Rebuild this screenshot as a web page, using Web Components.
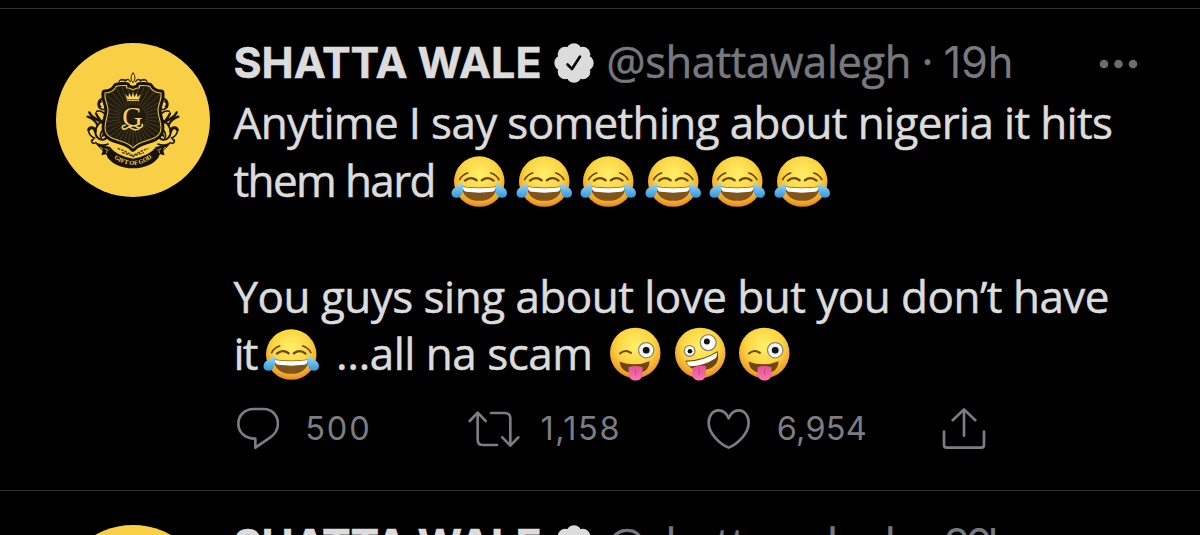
<!DOCTYPE html>
<html lang="en">
<head>
<meta charset="utf-8">
<title>Timeline</title>
<style>
  body {
    margin: 0;
    height: 535px;
    overflow: hidden;
    background: #000;
    color: #dcdcdc;
    font-family: "Open Sans", "Noto Sans", sans-serif;
  }
</style>
</head>
<body>
<tweet-timeline>
  <tweet-card name="SHATTA WALE" handle="@shattawalegh" time="19h" replies="500" retweets="1,158" likes="6,954">
    <tweet-line><fit-text width="879.5">Anytime I say something about nigeria it hits</fit-text></tweet-line>
    <tweet-line><fit-text width="203">them hard</fit-text><emoji-face kind="joy" style="margin-left: 10.5px"></emoji-face><emoji-face kind="joy"></emoji-face><emoji-face kind="joy"></emoji-face><emoji-face kind="joy"></emoji-face><emoji-face kind="joy"></emoji-face><emoji-face kind="joy"></emoji-face></tweet-line>
    <tweet-line></tweet-line>
    <tweet-line><fit-text width="876">You guys sing about love but you don’t have</fit-text></tweet-line>
    <tweet-line><fit-text width="25">it</fit-text><emoji-face kind="joy"></emoji-face><fit-text width="257" style="margin-left: 13px">…all na scam</fit-text><emoji-face kind="wink" style="margin-left: 10px"></emoji-face><emoji-face kind="zany"></emoji-face><emoji-face kind="wink"></emoji-face></tweet-line>
  </tweet-card>
  <tweet-card name="SHATTA WALE" handle="@shattawalegh" time="20h"></tweet-card>
</tweet-timeline>

<script>
// spreads a run of text over a given advance width
class FitText extends HTMLElement {
  constructor() {
    super();
    this.attachShadow({ mode: 'open' });
    this.shadowRoot.innerHTML = `
      <style>
        :host { display: inline-block; white-space: nowrap; flex: none; }
      </style>
      <span><slot></slot></span>
    `;
  }

  connectedCallback() {
    const width = Number(this.getAttribute('width'));
    const count = this.textContent.length;
    const span = this.shadowRoot.querySelector('span');
    const natural = span.getBoundingClientRect().width;
    this.style.width = width + 'px';
    if (count > 1) {
      this.style.letterSpacing = (width - natural) / (count - 1) + 'px';
    }
  }
}

class TweetLine extends HTMLElement {
  constructor() {
    super();
    this.attachShadow({ mode: 'open' });
    this.shadowRoot.innerHTML = `
      <style>
        :host {
          display: flex;
          height: 57.8px;
          line-height: 57.8px;
          font-size: 44px;
          -webkit-text-stroke: .5px currentColor;
        }
      </style>
      <slot></slot>
    `;
  }
}

const FACE = `
  <defs>
    <radialGradient id="skin" cx=".5" cy=".36" r=".66">
      <stop offset="0" stop-color="#fff06a"/>
      <stop offset=".55" stop-color="#fbd542"/>
      <stop offset=".85" stop-color="#f0a52c"/>
      <stop offset="1" stop-color="#d97f1b"/>
    </radialGradient>
    <linearGradient id="tear" x1="0" y1="0" x2="0" y2="1">
      <stop offset="0" stop-color="#9edcf6"/>
      <stop offset="1" stop-color="#3196dc"/>
    </linearGradient>
    <linearGradient id="tongue" x1="0" y1="0" x2="0" y2="1">
      <stop offset="0" stop-color="#e35391"/>
      <stop offset="1" stop-color="#f977b3"/>
    </linearGradient>
  </defs>
  <circle r="76" fill="url(#skin)"/>`;

const FACES = {
  joy: `
    <g fill="none" stroke="#6b430f" stroke-linecap="round">
      <path stroke-width="5" d="M-59 -6Q-51 -21 -35 -26M59 -6Q51 -21 35 -26"/>
      <path stroke-width="7" d="M-43 -3Q-26 -17 -8 -4M43 -3Q26 -17 8 -4"/>
    </g>
    <path fill="#80551b" d="M-53 14Q0 22 53 14Q48 58 0 58Q-48 58 -53 14Z"/>
    <path fill="#fff" d="M-50 16Q0 24 50 16Q48 30 38 31Q0 36 -38 31Q-48 30 -50 16Z"/>
    <path fill="url(#tear)" d="M-50 2C-46 24 -50 49 -68 49C-84 49 -88 34 -78 22C-70 15 -57 11 -50 2Z"/>
    <path fill="url(#tear)" d="M50 2C46 24 50 49 68 49C84 49 88 34 78 22C70 15 57 11 50 2Z"/>`,
  wink: `
    <path fill="none" stroke="#704512" stroke-width="6" stroke-linecap="round" d="M-46 2Q-30 -12 -13 0"/>
    <circle cx="33" cy="-8" r="23" fill="#fff" stroke="#8d8568" stroke-width="4"/>
    <circle cx="33" cy="-8" r="15" fill="#e9ecec"/>
    <circle cx="33" cy="-8" r="10" fill="#111"/>
    <path fill="#704512" d="M-47 27Q0 43 43 25Q42 60 0 62Q-44 60 -47 27Z"/>
    <path fill="url(#tongue)" d="M-20 43Q0 36 22 43V64Q20 83 1 83Q-18 83 -20 64Z"/>
    <path stroke="#d0437f" stroke-width="3" d="M1 50V67"/>`,
  zany: `
    <circle cx="24" cy="-31" r="24" fill="#fff" stroke="#8d8568" stroke-width="4"/>
    <circle cx="20" cy="-34" r="9" fill="#111"/>
    <circle cx="-32" cy="-6" r="16" fill="#fff" stroke="#8d8568" stroke-width="4"/>
    <circle cx="-31" cy="-5" r="7" fill="#111"/>
    <path fill="#704512" d="M-45 24Q10 22 52 -6Q62 38 20 50Q-30 62 -45 24Z"/>
    <path fill="#fff" d="M-41 27Q10 25 50 -1Q52 10 46 16Q10 40 -32 40Q-39 36 -41 27Z"/>
    <path fill="url(#tongue)" d="M-24 46Q-4 34 17 40V64Q15 83 -3 83Q-22 83 -24 64Z"/>
    <path stroke="#d0437f" stroke-width="3" d="M-3 48V66"/>`
};

class EmojiFace extends HTMLElement {
  constructor() {
    super();
    this.attachShadow({ mode: 'open' });
  }

  connectedCallback() {
    const kind = this.getAttribute('kind');
    const top = kind === 'joy' ? -89 : -84;
    this.shadowRoot.innerHTML = `
      <style>
        :host { display: block; flex: none; width: 64.5px; height: 57.8px; }
        svg { display: block; width: 100%; height: 100%; }
      </style>
      <svg viewBox="-97 ${top} 194 174">${FACE}${FACES[kind]}</svg>
    `;
  }
}

class CrestAvatar extends HTMLElement {
  constructor() {
    super();
    // rays that fan out behind the monogram
    let rays = '';
    for (let i = 0; i < 36; i++) {
      const a = i * Math.PI / 18;
      rays += `M${279 + 38 * Math.cos(a)} ${262 + 38 * Math.sin(a)}L${279 + 110 * Math.cos(a)} ${262 + 110 * Math.sin(a)}`;
    }
    const shield = 'M279 179C276 179 272 174 262 174H260V167C248 166 238 166 229 169C222 182 211 189 195 189C192 210 204 222 204 240C204 264 188 286 198 308C212 335 258 328 279 354C300 328 346 335 360 308C370 286 354 264 354 240C354 222 366 210 363 189C347 189 336 182 329 169C320 166 310 166 298 167V174H296C286 174 282 179 279 179Z';
    const side = `
      <g fill="none" stroke="#1b160c" stroke-linecap="round">
        <path stroke-width="5" d="M192 206C172 206 168 232 186 238C198 241 203 228 194 224M184 214C176 218 176 226 182 230"/>
        <path stroke-width="5" d="M170 244C182 240 198 250 200 262"/>
        <path stroke-width="7" d="M148 247C154 262 166 264 176 272M168 250C172 262 180 266 184 278M143 260C154 264 166 272 172 284"/>
        <path stroke-width="9" d="M146 300C148 290 164 290 166 304"/>
        <path stroke-width="6" d="M188 272C172 280 158 306 172 322C182 334 198 330 200 320C200 312 190 310 188 318"/>
        <path stroke-width="5" d="M146 306C150 316 156 322 164 324M160 328C152 330 154 340 162 340M166 338C176 346 192 348 204 342M198 296C182 300 178 316 184 324"/>
      </g>
      <path fill="#17130b" d="M168 342L212 351L206 360L212 386L197 373L184 376L188 363Z"/>
      <path fill="none" stroke="#d9b53d" stroke-width="2.5" d="M180 352L187 355L185 361M194 356L202 359L199 370"/>`;
    this.attachShadow({ mode: 'open' });
    this.shadowRoot.innerHTML = `
      <style>
        :host { display: block; flex: none; width: 154px; height: 154px; }
        svg { display: block; width: 100%; height: 100%; }
      </style>
      <svg viewBox="48 39 462 462">
        <defs>
          <clipPath id="shield"><path d="${shield}"/></clipPath>
          <path id="curve" d="M217 381Q279 430 343 378"/>
        </defs>
        <circle cx="279" cy="270" r="231" fill="#f8cf45"/>
        <g>${side}</g>
        <g transform="matrix(-1 0 0 1 558 0)">${side}</g>
        <path fill="none" stroke="#2b230f" stroke-width="4" d="M236 155Q246 142 256 153Q264 142 272 156M322 155Q312 142 302 153Q294 142 286 156M240 150H262M296 150H318"/>
        <path fill="#f8cf45" stroke="#2b230f" stroke-width="3" d="M279 128Q267 144 279 158Q291 144 279 128Z"/>
        <path fill="#17130b" stroke="#17130b" stroke-width="21" stroke-linejoin="round" d="${shield}"/>
        <path fill="#221c10" stroke="#e3be46" stroke-width="3.5" d="${shield}"/>
        <path clip-path="url(#shield)" stroke="#5a4a24" stroke-width="2" d="${rays}"/>
        <path fill="#f8d95f" d="M256 192L265 202L268 189L275 202L279 186L283 202L290 189L293 202L302 192L297 208H261Z"/>
        <path stroke="#f8d95f" stroke-width="3" d="M261 211H297"/>
        <text x="277" y="287" text-anchor="middle" font-family="Liberation Serif, serif" font-size="84" fill="#f3d463">G</text>
        <path fill="none" stroke="#f3d463" stroke-width="5" d="M257 286C242 284 244 302 258 296C272 286 284 285 292 292C302 296 312 288 305 282M266 288C276 300 290 303 300 294"/>
        <path fill="none" stroke="#4b3c15" stroke-width="4" stroke-dasharray="8 3" d="M233 355Q257 364 279 377Q301 364 325 355M246 368Q265 372 279 380Q293 372 312 368"/>
        <path fill="#17130b" d="M210 351Q230 378 279 386Q328 378 348 351L357 380Q333 414 279 415Q225 414 201 380Z"/>
        <text font-family="Liberation Serif, serif" font-size="19" font-weight="bold" fill="#f3d463"><textPath href="#curve" startOffset="6" textLength="124">GIFT OF GOD</textPath></text>
      </svg>
    `;
  }
}

// [viewBox, width, height, drawing]
const ICONS = {
  reply: ['35 36 128 130', 42.7, 43.3, 'M85 42H115C140 42 158 61 158 86C158 105 148 118 135 127L90 158V131C60 132 39 112 39 86C39 61 58 42 85 42Z'],
  retweet: ['728 44 156 112', 52, 37.3, 'M733 77L757 52L781 77M757 54V133Q757 149 773 149H815M797 53H838Q855 53 855 69V149M831 126L855 151L879 126'],
  like: ['262 38 130 126', 43.3, 42, 'M327 69C320 52 308 45 297 45C279 45 267 62 267 82C267 115 300 145 327 157C354 145 387 115 387 82C387 62 375 45 357 45C346 45 334 52 327 69Z'],
  share: ['968 36 132 130', 44, 43.3, 'M974 110V150Q974 158 982 158H1086Q1094 158 1094 150V110M1034 122V44M1000 76L1034 43L1068 76']
};

class LineIcon extends HTMLElement {
  constructor() {
    super();
    this.attachShadow({ mode: 'open' });
  }

  connectedCallback() {
    const [box, width, height, d] = ICONS[this.getAttribute('name')];
    this.shadowRoot.innerHTML = `
      <style>
        :host { display: block; flex: none; }
        svg { display: block; fill: none; stroke: currentColor; stroke-width: 8; stroke-linecap: round; stroke-linejoin: round; }
      </style>
      <svg viewBox="${box}" width="${width}" height="${height}"><path d="${d}"/></svg>
    `;
  }
}

class TweetCard extends HTMLElement {
  constructor() {
    super();
    this.attachShadow({ mode: 'open' });
  }

  connectedCallback() {
    const get = (name) => this.getAttribute(name) || '';
    const actions = get('replies') ? `
      <div class="actions">
        <div class="action first"><line-icon name="reply"></line-icon><fit-text width="64.5">${get('replies')}</fit-text></div>
        <div class="action second"><line-icon name="retweet"></line-icon><fit-text width="79">${get('retweets')}</fit-text></div>
        <div class="action third"><line-icon name="like"></line-icon><fit-text width="90">${get('likes')}</fit-text></div>
        <line-icon name="share"></line-icon>
      </div>` : '';
    this.shadowRoot.innerHTML = `
      <style>
        :host {
          display: flex;
          box-sizing: border-box;
          height: 482px;
          padding: 24.3px 60px 0 56px;
          border-bottom: 1px solid #303234;
        }
        crest-avatar { margin-top: 9.7px; }
        .body { flex: 1; margin-left: 23.5px; }
        header {
          display: flex;
          align-items: baseline;
          height: 58px;
          margin-bottom: 3px;
          line-height: 58px;
          font-size: 43.5px;
          color: #77797e;
          -webkit-text-stroke: .5px currentColor;
        }
        .name { font-family: Inter, sans-serif; font-size: 43px; font-weight: 750; color: #dcdcdc; }
        .badge { align-self: center; flex: none; margin: 1px 13px 0 12px; }
        .dot { width: 32px; text-align: center; }
        .time { font-family: Inter, sans-serif; font-size: 43.5px; -webkit-text-stroke: 0; }
        .more { align-self: center; flex: none; margin: 3px 2px 0 auto; }
        .actions {
          display: flex;
          align-items: center;
          height: 91px;
          font-family: Inter, sans-serif;
          font-size: 32.5px;
          color: #7b7d82;
        }
        .action { display: flex; align-items: center; box-sizing: border-box; }
        .first { width: 234px; gap: 26px; padding-left: 3px; }
        .second { width: 239.5px; gap: 21px; }
        .third { width: 234.5px; gap: 26.5px; }
      </style>
      <crest-avatar></crest-avatar>
      <div class="body">
        <header>
          <fit-text class="name" width="308">${get('name')}</fit-text>
          <svg class="badge" width="40" height="40" viewBox="-20 -20 40 40">
            <g fill="#dcdcdc">
              <circle r="15"/>
              <circle cy="-12" r="7.7"/><circle cy="12" r="7.7"/><circle cx="-12" r="7.7"/><circle cx="12" r="7.7"/>
              <circle cx="-8.8" cy="-8.8" r="7.5"/><circle cx="8.8" cy="-8.8" r="7.5"/><circle cx="-8.8" cy="8.8" r="7.5"/><circle cx="8.8" cy="8.8" r="7.5"/>
            </g>
            <path fill="none" stroke="#000" stroke-width="2.6" stroke-linecap="round" stroke-linejoin="round" d="M-6.5 1.5L-2 6L6 -6.5"/>
          </svg>
          <fit-text width="305">${get('handle')}</fit-text>
          <span class="dot">·</span>
          <fit-text class="time" width="70">${get('time')}</fit-text>
          <svg class="more" width="40" height="12" viewBox="0 0 40 12" fill="#6b6c6f">
            <circle cx="6" cy="6" r="4.3"/><circle cx="20.5" cy="6" r="4.3"/><circle cx="35" cy="6" r="4.3"/>
          </svg>
        </header>
        <slot></slot>
        ${actions}
      </div>
    `;
  }
}

class TweetTimeline extends HTMLElement {
  constructor() {
    super();
    this.attachShadow({ mode: 'open' });
    this.shadowRoot.innerHTML = `
      <style>
        :host { display: block; height: 535px; overflow: hidden; }
        .previous { height: 8px; border-bottom: 1px solid #303234; }
      </style>
      <div class="previous"></div>
      <slot></slot>
    `;
  }
}

customElements.define('tweet-timeline', TweetTimeline);
customElements.define('tweet-card', TweetCard);
customElements.define('tweet-line', TweetLine);
customElements.define('fit-text', FitText);
customElements.define('emoji-face', EmojiFace);
customElements.define('crest-avatar', CrestAvatar);
customElements.define('line-icon', LineIcon);
</script>
</body>
</html>
